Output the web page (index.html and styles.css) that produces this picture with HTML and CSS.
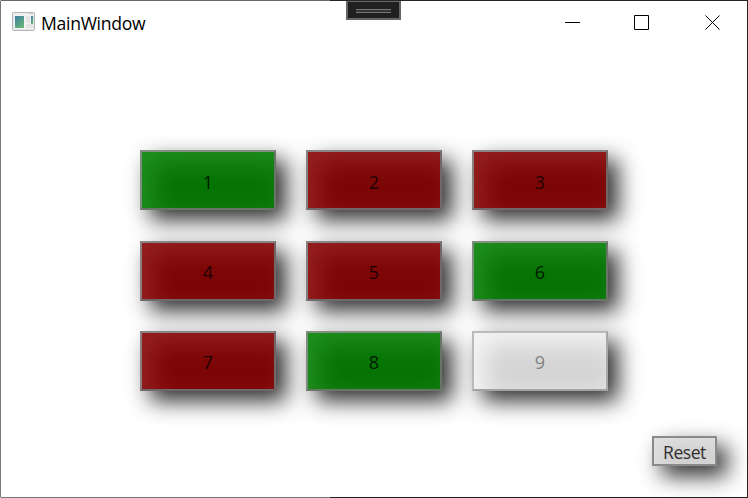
FILE: index.html
```html
<!DOCTYPE html>
<html lang="en">
<head>
<meta charset="utf-8">
<title>MainWindow</title>
<link rel="stylesheet" href="styles.css">
</head>
<body>
<div class="window">
  <header class="titlebar">
    <svg class="app-icon" width="23" height="19" viewBox="0 0 23 19">
      <defs><linearGradient id="pane" x1="0" y1="0" x2="0.6" y2="1"><stop offset="0" stop-color="#427ca6"/><stop offset="1" stop-color="#62b477"/></linearGradient></defs>
      <rect x=".5" y=".5" width="22" height="18" rx="1" fill="#e4e6e8" stroke="#b2b6ba"/>
      <path d="M1.5 1.5h20v1h-20z" fill="#f5f5f5"/>
      <path d="M2 3h19v14H2z" fill="#f3f3f3"/>
      <path d="M3 4h9v12H3z" fill="url(#pane)"/>
      <path d="M14 4h4v7h-4zM14 12h7v4h-7z" fill="#e4e4e4"/>
      <path d="M19 4h2v8h-2z" fill="url(#pane)"/>
      <path d="M17 1h4v1h-4z" fill="#c9cdd0"/>
    </svg>
    <h1 class="title">MainWindow</h1>
    <svg class="controls" width="156" height="16" viewBox="0 0 156 16">
      <path d="M0 7.5h15M69.5.5h14v14h-14zM140.5.5l14 14M154.5.5l-14 14" fill="none" stroke="#000"/>
    </svg>
  </header>
  <main class="board">
    <button class="cell green">1</button>
    <button class="cell red">2</button>
    <button class="cell red">3</button>
    <button class="cell red">4</button>
    <button class="cell red">5</button>
    <button class="cell green">6</button>
    <button class="cell red">7</button>
    <button class="cell green">8</button>
    <button class="cell blank">9</button>
  </main>
  <footer class="actions"><button class="reset">Reset</button></footer>
  <div class="handle"><span class="grip"></span></div>
</div>
</body>
</html>
```
FILE: styles.css
```css
* { box-sizing: border-box; }
body { margin: 0; font-family: "Segoe UI", "Open Sans", "Noto Sans", sans-serif; }
.window {
  position: relative;
  width: 748px;
  height: 498px;
  border: 1px solid transparent;
  border-left-color: #777;
  border-right-color: #28241f;
  background:
    linear-gradient(90deg, #666 330px, #28241f 330px) 0 0 / 100% 1px no-repeat border-box,
    linear-gradient(90deg, #777 330px, #222 330px) 0 100% / 100% 1px no-repeat border-box,
    #fff;
  overflow: hidden;
}
.titlebar { display: flex; height: 44px; padding: 0 26px 0 11px; }
.app-icon { margin-top: 11px; }
.title { margin: 10px 0 0 6px; font-size: 17.6px; line-height: 25px; font-weight: 400; letter-spacing: -0.3px; }
.controls { margin: 14px 0 0 auto; }
.board {
  display: grid;
  grid-template-columns: repeat(3, 136px);
  grid-auto-rows: 60px;
  gap: 30.3px 30px;
  padding: 105.4px 0 0 139px;
}
button { margin: 0; padding: 0; font-family: inherit; }
.cell {
  border: 2px solid #777;
  padding-top: 3px;
  font-size: 18px;
  line-height: 26px;
  color: rgba(0, 0, 0, 0.8);
  box-shadow: 10px 10px 22px rgba(0, 0, 0, 0.82), inset 11px 10px 24px var(--glow);
}
.green { background: #067406; border-color: #849084 #687568 #687568 #7e8c7e; --glow: rgba(44, 156, 44, 0.68); }
.red { background: #7c0606; border-color: #8b8484 #716969 #716969 #868080; --glow: rgba(165, 48, 48, 0.62); }
.blank { background: #d5d5d5; border-color: #b7bbbb #a5a9a9 #a0a4a4 #b7bbbb; color: #838383; --glow: rgba(255, 255, 255, 0.78); }
.actions { display: flex; justify-content: flex-end; padding: 45px 30px 0 0; }
.reset {
  width: 65px;
  height: 30px;
  border: 2px solid #8a8a8a;
  padding-top: 2px;
  background: #cfcfcf;
  color: #303030;
  font-size: 17.6px;
  line-height: 24px;
  letter-spacing: -0.5px;
  box-shadow: 10px 10px 22px rgba(0, 0, 0, 0.82), inset 6px 6px 18px rgba(255, 255, 255, 0.4);
}
.handle {
  position: absolute;
  top: -1px;
  left: 345px;
  width: 55px;
  height: 20px;
  border: 2px solid #666;
  background: #202020;
  padding: 7px 8px;
}
.grip { display: block; height: 4px; border: solid #777; border-width: 1px 0; background: #333; }
```
